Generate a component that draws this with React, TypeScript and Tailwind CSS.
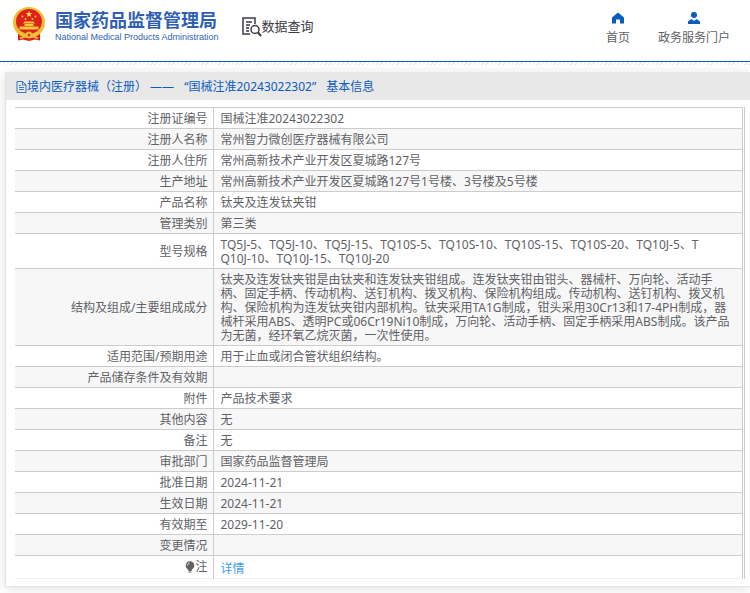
import React from 'react';
import clsx from 'clsx';

interface Row {
    label: string;
    value: string;
}

const rows: Row[] = [
    { label: '注册证编号', value: '国械注准20243022302' },
    { label: '注册人名称', value: '常州智力微创医疗器械有限公司' },
    { label: '注册人住所', value: '常州高新技术产业开发区夏城路127号' },
    { label: '生产地址', value: '常州高新技术产业开发区夏城路127号1号楼、3号楼及5号楼' },
    { label: '产品名称', value: '钛夹及连发钛夹钳' },
    { label: '管理类别', value: '第三类' },
    {
        label: '型号规格',
        value: 'TQ5J-5、TQ5J-10、TQ5J-15、TQ10S-5、TQ10S-10、TQ10S-15、TQ10S-20、TQ10J-5、T\nQ10J-10、TQ10J-15、TQ10J-20',
    },
    {
        label: '结构及组成/主要组成成分',
        value: '钛夹及连发钛夹钳是由钛夹和连发钛夹钳组成。连发钛夹钳由钳头、器械杆、万向轮、活动手柄、固定手柄、传动机构、送钉机构、拨叉机构、保险机构组成。传动机构、送钉机构、拨叉机构、保险机构为连发钛夹钳内部机构。钛夹采用TA1G制成，钳头采用30Cr13和17-4PH制成，器械杆采用ABS、透明PC或06Cr19Ni10制成，万向轮、活动手柄、固定手柄采用ABS制成。该产品为无菌，经环氧乙烷灭菌，一次性使用。',
    },
    { label: '适用范围/预期用途', value: '用于止血或闭合管状组织结构。' },
    { label: '产品储存条件及有效期', value: '' },
    { label: '附件', value: '产品技术要求' },
    { label: '其他内容', value: '无' },
    { label: '备注', value: '无' },
    { label: '审批部门', value: '国家药品监督管理局' },
    { label: '批准日期', value: '2024-11-21' },
    { label: '生效日期', value: '2024-11-21' },
    { label: '有效期至', value: '2029-11-20' },
    { label: '变更情况', value: '' },
];

const Emblem = () => (
    <svg viewBox="0 0 34 36" className="h-9 w-[34px] shrink-0" aria-hidden="true">
        <path d="M6 25 L6 34.500 L11 33.500 L17 35 L23 33.500 L28 34.500 L28 25 Z" fill="#d8201c" />
        <ellipse cx="17" cy="16.500" rx="16" ry="15.500" fill="#eebd33" />
        <ellipse cx="17" cy="15.500" rx="13" ry="12.500" fill="#e0201a" />
        <path d="M17 5l.9 2.100 2.300.2-1.700 1.500.5 2.200-2-1.200-2 1.200.5-2.200-1.700-1.500 2.300-.2z" fill="#f8d34a" />
        <g fill="#f8c93a">
            <circle cx="10.500" cy="10.500" r="1" />
            <circle cx="23.500" cy="10.500" r="1" />
            <circle cx="13.500" cy="13" r="1" />
            <circle cx="20.500" cy="13" r="1" />
            <path d="M11 17.500l1.500-2h9l1.500 2zM12.500 18h9v2h-9zM7.500 20.500h19v3h-19z" />
        </g>
        <path d="M5 26q7 1 8.500 3M29 26q-7 1-8.500 3M8 32.500l5-2M26 32.500l-5-2" fill="none" stroke="#f0c030" strokeWidth="1.500" />
        <circle cx="17" cy="29" r="3.500" fill="#eebd33" />
        <circle cx="17" cy="29" r="1.200" fill="#dd1f1b" />
    </svg>
);

const QueryIcon = () => (
    <svg viewBox="0 0 20 20" className="h-5 w-5 shrink-0" fill="none" stroke="#3a3a44" strokeWidth="1.5" aria-hidden="true">
        <path d="M8 17H1V1h12v6M4 5h6M4 8h4M4 11h3M4 14h3" />
        <circle cx="13" cy="12.500" r="4" />
        <path d="M16 15.500l3 3.500" strokeWidth="2" />
    </svg>
);

const HomeIcon = () => (
    <svg viewBox="0 0 12 12" className="h-3 w-3" fill="#0b5cc0" aria-hidden="true">
        <path d="M6 .5L0 5.500v6h4V7.500h4v4h4v-6z" />
    </svg>
);

const UserIcon = () => (
    <svg viewBox="0 0 12 12" className="h-3 w-3" fill="#0b5cc0" aria-hidden="true">
        <circle cx="6" cy="3" r="3" />
        <path d="M0 12V9.500L3.500 7 6 9l2.500-2L12 9.500V12z" />
    </svg>
);

const DocIcon = () => (
    <svg viewBox="0 0 11 12" className="h-3 w-[11px] shrink-0" fill="none" stroke="#0b5cc0" strokeWidth=".8" aria-hidden="true">
        <path d="M1 .5h5.500l3.500 3.500v7.500h-9zM6.500 .5v3.500h3.500M3 4.500h2M3 6.500h5M3 8.500h5" />
    </svg>
);

const BulbIcon = () => (
    <svg viewBox="0 0 10 12" className="inline-block h-3 w-[10px]" fill="#606266" aria-hidden="true">
        <circle cx="5" cy="4.500" r="4.300" />
        <path d="M2.500 7.500h5L6.500 10h-3zM3.500 10.500h3v1h-3z" />
        <path d="M2.500 4.500Q2.500 2.500 4.500 2" fill="none" stroke="#fff" strokeWidth=".8" />
    </svg>
);

const labelCell = 'w-[198px] border-r border-[#ccc] pb-[2px] pr-[5px] pt-1 text-right font-normal';

export default function App() {
    return (
        <div className="overflow-hidden bg-white pb-3 font-['Noto_Sans','Noto_Sans_CJK_SC',sans-serif] text-xs leading-[14px] text-[#606266]">
            <header className="border-b border-[#0b5cc0]">
                <div className="flex h-[61px] items-start justify-between pl-3 pr-5">
                    <div className="flex items-start">
                        <div className="flex items-start gap-[9px] pt-[6px]">
                            <Emblem />
                            <div className="whitespace-nowrap pt-1 text-[#2f5fb3]">
                                <h1 className="text-lg font-bold leading-5">国家药品监督管理局</h1>
                                <p className="font-['Liberation_Sans',sans-serif] text-[9px] leading-[14px]">
                                    National Medical Products Administration
                                </p>
                            </div>
                        </div>
                        <div className="ml-[23px] flex items-center pt-4 text-[13px] leading-5 text-[#3a3a44]">
                            <QueryIcon />
                            <span className="whitespace-nowrap pb-[2px]">数据查询</span>
                        </div>
                    </div>
                    <nav className="flex gap-7 pt-3 leading-[18px]">
                        <a href="#home" className="flex flex-col items-center gap-[5px]">
                            <HomeIcon />
                            首页
                        </a>
                        <a href="#portal" className="flex flex-col items-center gap-[5px]">
                            <UserIcon />
                            政务服务门户
                        </a>
                    </nav>
                </div>
            </header>
            <div className="h-[3px] bg-[repeating-linear-gradient(135deg,#ececec_0px,#ececec_1px,#fff_1px,#fff_3px)]" />

            <main className="ml-[5px] mt-[7px] border-b border-l border-[#e4e4e4] pb-[7px] shadow-[0_2px_12px_rgba(0,0,0,0.12)]">
                <h2 className="flex h-7 items-center gap-[10px] whitespace-nowrap bg-[#e8e8e8] pl-[10px] pt-[2px] text-[#0b5cc0]">
                    <span className="flex items-center">
                        <DocIcon />
                        境内医疗器械（注册） ——
                    </span>
                    <span>“国械注准20243022302”</span>
                    <span>基本信息</span>
                </h2>
                <div className="ml-[9px] mr-[5px] mt-[7px] border-r border-[#ccc] pr-px">
                    <table className="w-full table-fixed border-collapse border-r border-t border-[#ccc]">
                        <tbody>
                            {rows.map((row, i) => (
                                <tr
                                    key={row.label}
                                    className={clsx('h-[21px] border-b border-[#ccc]', i % 2 === 1 && 'bg-[#f7f7f7]')}
                                >
                                    <th scope="row" className={labelCell}>{row.label}</th>
                                    <td className="whitespace-pre-line pb-[2px] pl-[7px] pr-[6px] pt-1">{row.value}</td>
                                </tr>
                            ))}
                            <tr className="h-[23px] border-b border-[#ebeef5]">
                                <th scope="row" className={labelCell}>
                                    <span className="inline-flex items-center">
                                        <BulbIcon />
                                        注
                                    </span>
                                </th>
                                <td className="pl-[7px] pt-1">
                                    <a href="#detail" className="text-[#409eff]">详情</a>
                                </td>
                            </tr>
                        </tbody>
                    </table>
                </div>
            </main>
        </div>
    );
}
